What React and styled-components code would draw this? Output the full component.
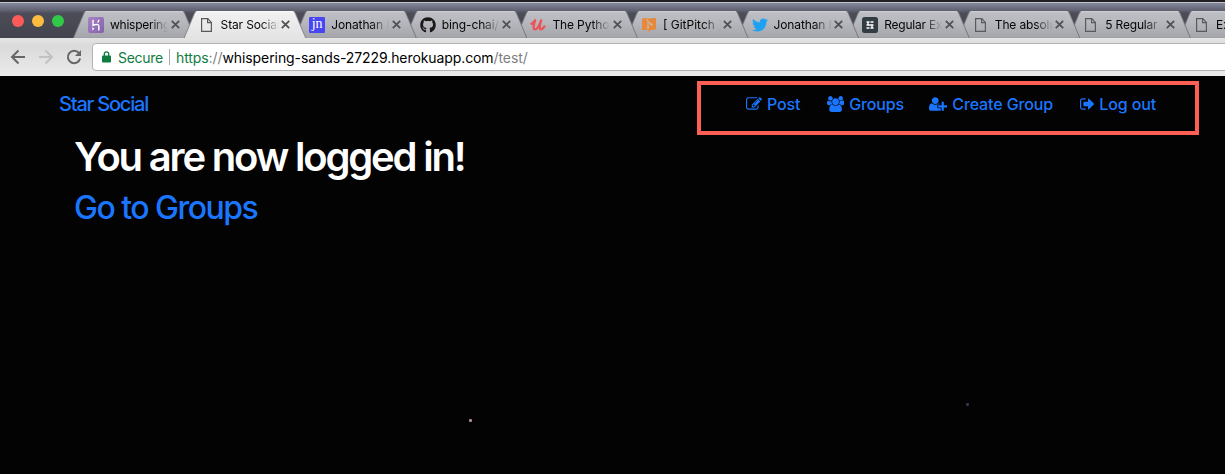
import React from 'react';
import styled, { createGlobalStyle, css } from 'styled-components';
import { FaGithub, FaTwitter } from 'react-icons/fa';

const GlobalStyle = createGlobalStyle`
  * { box-sizing: border-box; }
  body { margin: 0; background: #030303; font-family: Inter, "Liberation Sans", sans-serif; }
  a { color: inherit; text-decoration: none; }
`;

const Window = styled.div`
  position: relative;
  width: 1225px;
  height: 474px;
  overflow: hidden;
  background: #030303;
`;

const TabStrip = styled.div`
  display: flex;
  align-items: flex-end;
  height: 38px;
  border-top: 2px solid #221f25;
  background: linear-gradient(#c2c2c8 0, #c2c2c8 1px, #85889b 1px, #7b7e90 3px, #5d5f6e 9px, #4c4d58 11px, #42434c 36px);
`;

const Lights = styled.div`
  display: flex;
  gap: 8px;
  width: 73px;
  flex: none;
  padding: 0 0 11px 12px;
`;

const Light = styled.span`
  width: 12px;
  height: 12px;
  border-radius: 50%;
  background: ${(p) => p.$color};
`;

const edge = 'polygon(0 100%, 10.5px 2px, 12px 0, calc(100% - 12px) 0, calc(100% - 10.5px) 2px, 100% 100%)';

const TabBox = styled.div`
  position: relative;
  z-index: ${(p) => p.$z};
  flex: none;
  display: flex;
  align-items: center;
  width: 122.6px;
  height: 27px;
  margin-right: -12px;
  padding-left: 15px;
  &::before, &::after {
    content: "";
    position: absolute;
    z-index: -1;
    inset: 0;
    clip-path: ${edge};
  }
  &::before { background: ${(p) => (p.$active ? '#85868b' : '#77787e')}; }
  &::after {
    left: 1px;
    right: 1px;
    ${(p) => (p.$active
    ? css`background: linear-gradient(#fafafa 0, #f0f0f0 2px, #e4e4e4);`
    : css`background: linear-gradient(#d0d0d5 0, #bdbec3 2px, #b8b9be 10px, #a6a7ac 26px, #98999d 27px);`)}
  }
`;

const Favicon = styled.span`
  display: flex;
  flex: none;
  width: 16px;
  height: 16px;
  svg { display: block; }
`;

const TabTitle = styled.span`
  width: 59px;
  margin-left: 6px;
  overflow: hidden;
  white-space: nowrap;
  font-size: 12px;
  line-height: 16px;
  letter-spacing: ${(p) => p.$ls ?? -0.12}px;
  color: #050505;
  mask-image: linear-gradient(to right, #000 40px, transparent 58px);
`;

const CloseIcon = styled.svg`
  display: block;
  flex: none;
  width: 9px;
  height: 9px;
  margin-left: 1.5px;
  stroke: #505154;
  stroke-width: 1.8;
`;

const Toolbar = styled.div`
  display: flex;
  align-items: center;
  height: 38px;
  padding-left: 10px;
  background: linear-gradient(#e5e5e5, #dadada 8px, #e8e8e8 33px, #ececec);
`;

const ToolIcon = styled.svg`
  flex: none;
  width: 16px;
  height: 16px;
  margin-right: 12px;
  fill: none;
  stroke: ${(p) => (p.$dim ? '#c1c1c1' : '#666')};
  stroke-width: 2;
`;

const AddressBar = styled.div`
  display: flex;
  align-items: center;
  flex: 1;
  height: 28px;
  margin: 0 -4px 0 -2px;
  padding-left: 9px;
  border: 1px solid #b3b3b3;
  border-radius: 4px;
  background: #fff;
  font-size: 14px;
  white-space: nowrap;
`;

const Secure = styled.span`
  margin-left: 7px;
  width: 47px;
  letter-spacing: -0.3px;
  color: #0f7c3f;
`;

const Divider = styled.span`
  width: 1px;
  height: 16px;
  margin: 0 6px 0 4px;
  background: #aaa;
`;

const Url = styled.span`
  letter-spacing: -0.09px;
  color: #000;
`;

const Scheme = styled.span`color: #0f7c3f;`;
const Faded = styled.span`color: #808080;`;

const Page = styled.main`
  position: relative;
  height: 398px;
  background: #030303;
`;

const Navbar = styled.nav`
  display: flex;
  align-items: flex-start;
  justify-content: space-between;
  height: 59px;
  padding: 5px 26px 0 59px;
  color: #1b76ff;
`;

const Brand = styled.a`
  margin-top: 11px;
  font-size: 20px;
  line-height: 24px;
  font-weight: 450;
  letter-spacing: -1.2px;
`;

const NavLinks = styled.div`
  display: flex;
  width: 502px;
  height: 54px;
  padding: 7px 0 0 45px;
  border: 4px solid #fe5f55;
`;

const NavLink = styled.a`
  display: flex;
  align-items: center;
  flex: none;
  width: ${(p) => p.$w}px;
  height: 24px;
  font-size: 16px;
  font-weight: 450;
  letter-spacing: -0.12px;
  svg { flex: none; margin-right: 5px; fill: currentColor; }
`;

const Content = styled.section`
  padding-left: 74px;
`;

const Heading = styled.h1`
  margin: 0;
  font-size: 40px;
  line-height: 44px;
  font-weight: 600;
  letter-spacing: -2.18px;
  color: #fff;
`;

const SubHeading = styled.h2`
  margin: 10px 0 0;
  font-size: 32px;
  line-height: 38px;
  font-weight: 500;
  letter-spacing: -1.52px;
  color: #1b76ff;
`;

const Star = styled.i`
  position: absolute;
  left: ${(p) => p.$x}px;
  top: ${(p) => p.$y}px;
  width: 3px;
  height: 3px;
  border-radius: 1px;
  background: ${(p) => p.$color};
`;

const PageIcon = () => (
  <svg width="16" height="16" viewBox="0 0 16 16" fill="none" stroke="#5a5a5c" strokeWidth="1.2">
    <path d="M2.600 1.600h6.200l3.600 3.800v9H2.600zM8.600 1.800v3.800h3.600" />
  </svg>
);

const HerokuIcon = styled.span`
  display: flex;
  align-items: center;
  justify-content: center;
  width: 16px;
  height: 16px;
  border-radius: 2px;
  background: linear-gradient(135deg, #a783c5, #8462ab);
`;

const HerokuMark = () => (
  <HerokuIcon>
    <svg width="16" height="16" viewBox="0 0 16 16" fill="none" stroke="#fff" strokeWidth="1.400">
      <path d="M5 2.800v5.600c2-1 5.800-1.600 5.800.4v4.600M10.800 2.800c0 1.300-.4 2-1.200 2.800" />
      <path d="M4.400 10l2 1.800-2 1.800z" fill="#fff" stroke="none" />
    </svg>
  </HerokuIcon>
);

const JnIcon = styled.span`
  width: 16px;
  height: 16px;
  border-radius: 1px;
  background: #4845f5;
  color: #fff;
  font: 14px/13px "Liberation Serif", serif;
  text-align: center;
`;

const UdemyMark = () => (
  <svg width="17" height="16" viewBox="0 0 17 16" fill="none" stroke="#ed5356" strokeLinecap="round" strokeLinejoin="round">
    <path d="M1.500 6.800C3.300 6 4.600 4.500 5.400 3 4.500 5.800 2.400 12.700 5.300 12.700 8.200 12.700 10.500 7 11.800 3.200 10.700 6.500 9.300 12.500 11.700 12.500c1.500 0 2.800-1.500 3.700-3" strokeWidth="2.500" />
  </svg>
);

const PitchMark = () => (
  <svg width="16" height="16" viewBox="0 0 16 16">
    <path d="M1 1.500l4-.5 3 .5L15 1v11.500l-5 .3-2.200 2.700-.3-2.600L1 13z" fill="#e8883a" />
    <path d="M5.500 1.500l1.500 2.500v6.500M7 4.500l3.300 3" fill="none" stroke="#c9b6a8" strokeWidth="1.100" />
    <circle cx="10.300" cy="7.500" r="1.300" fill="#c9b6a8" />
    <circle cx="7" cy="10.500" r="1.200" fill="#c9b6a8" />
  </svg>
);

const GridMark = () => (
  <svg width="16" height="16" viewBox="0 0 16 16">
    <rect width="16" height="16" rx="2.500" fill="#313d42" />
    <path d="M4.500 5h3M8.500 5h3M4.500 8h7M4.500 11h3M8.500 11h3M6 5v3M10 8v3" stroke="#fff" strokeWidth="1.400" />
  </svg>
);

const Close = () => (
  <CloseIcon viewBox="0 0 9 9"><path d="M.8.8l7.400 7.400M8.200.8L.8 8.200" /></CloseIcon>
);

const tabs = [
  { title: 'whispering', ls: -0.25, icon: <HerokuMark /> },
  { title: 'Star Social', ls: -0.15, icon: <PageIcon />, active: true },
  { title: 'Jonathan N', icon: <JnIcon>jn</JnIcon> },
  { title: 'bing-chai/', icon: <FaGithub size={16} color="#1b1817" /> },
  { title: 'The Python', icon: <UdemyMark /> },
  { title: '[ GitPitch ]', ls: 0, icon: <PitchMark /> },
  { title: 'Jonathan N', icon: <FaTwitter size={16} color="#1da1f2" /> },
  { title: 'Regular Ex', ls: -0.2, icon: <GridMark /> },
  { title: 'The absolu', icon: <PageIcon /> },
  { title: '5 Regular', ls: -0.2, icon: <PageIcon /> },
  { title: 'Expression', ls: 0, icon: <PageIcon /> },
];

const links = [
  { label: 'Post', w: 81, iw: 16, vb: '0 0 1792 1792', d: 'M888 1184l116-116-152-152-116 116v56h96v96h56zm440-720q-16-16-33 1l-350 350q-17 17-1 33t33-1l350-350q17-17 1-33zm80 594v190q0 119-84.500 203.500t-203.500 84.500h-832q-119 0-203.500-84.500t-84.500-203.500v-832q0-119 84.500-203.500t203.500-84.500h832q63 0 117 25 15 7 18 23 3 17-9 29l-49 49q-14 14-32 8-23-6-45-6h-832q-66 0-113 47t-47 113v832q0 66 47 113t113 47h832q66 0 113-47t47-113v-126q0-13 9-22l64-64q15-15 35-7t20 29zm-96-738l288 288-672 672h-288v-288zm444 132l-92 92-288-288 92-92q28-28 68-28t68 28l152 152q28 28 28 68t-28 68z' },
  { label: 'Groups', w: 102, iw: 17.14, vb: '0 0 1920 1792', d: 'M593 896q-162 5-265 128h-134q-82 0-138-40.500t-56-118.500q0-353 124-353 6 0 43.500 21t97.500 42.500 119 21.500q67 0 133-23-5 37-5 66 0 159 90 287zm1071 637q0 120-73 189.500t-194 69.500h-874q-121 0-194-69.500t-73-189.500q0-53 3.500-103.500t14-109 26.500-108.500 43-97.500 62-81 85.500-53.500 111.500-20q10 0 43 21.500t73 48 107 48 135 21.500 135-21.500 107-48 73-48 43-21.500q61 0 111.500 20t85.500 53.500 62 81 43 97.500 26.500 108.500 14 109 3.500 103.500zm-1024-1277q0 106-75 181t-181 75-181-75-75-181 75-181 181-75 181 75 75 181zm704 384q0 159-112.500 271.500t-271.500 112.500-271.500-112.500-112.500-271.500 112.500-271.500 271.500-112.500 271.500 112.500 112.500 271.500zm576 225q0 78-56 118.500t-138 40.500h-134q-103-123-265-128 90-128 90-287 0-29-5-66 66 23 133 23 59 0 119-21.500t97.500-42.500 43.500-21q124 0 124 353zm-128-609q0 106-75 181t-181 75-181-75-75-181 75-181 181-75 181 75 75 181z' },
  { label: 'Create Group', w: 150.5, iw: 18.29, vb: '0 0 2048 1792', d: 'M704 896q-159 0-271.500-112.500t-112.500-271.500 112.500-271.500 271.500-112.500 271.500 112.500 112.500 271.500-112.500 271.500-271.500 112.500zm960 128h352q13 0 22.500 9.500t9.500 22.500v192q0 13-9.500 22.500t-22.500 9.500h-352v352q0 13-9.500 22.500t-22.500 9.500h-192q-13 0-22.500-9.500t-9.500-22.500v-352h-352q-13 0-22.500-9.500t-9.500-22.500v-192q0-13 9.500-22.500t22.500-9.500h352v-352q0-13 9.500-22.500t22.500-9.500h192q13 0 22.500 9.500t9.500 22.500v352zm-736 224q0 52 38 90t90 38h256v238q-68 50-171 50h-874q-121 0-194-69t-73-190q0-53 3.500-103.500t14-109 26.500-108.500 43-97.500 62-81 85.500-53.500 111.500-20q19 0 39 17 79 61 154.500 91.500t164.500 30.500 164.500-30.500 154.500-91.500q20-17 39-17 132 0 217 96h-223q-52 0-90 38t-38 90v192z' },
  { label: 'Log out', w: 90, iw: 14.86, vb: '0 0 1664 1792', d: 'M640 1440q0 4 1 20t.5 26.500-3 23.500-10 19.500-20.500 6.500h-320q-119 0-203.500-84.500t-84.500-203.500v-704q0-119 84.500-203.500t203.500-84.500h320q13 0 22.500 9.500t9.500 22.500q0 4 1 20t.5 26.500-3 23.500-10 19.500-20.500 6.500h-320q-66 0-113 47t-47 113v704q0 66 47 113t113 47h312l11.500 1 11.500 3 8 5.500 7 9 2 13.500zm928-544q0 26-19 45l-544 544q-19 19-45 19t-45-19-19-45v-288h-448q-26 0-45-19t-19-45v-384q0-26 19-45t45-19h448v-288q0-26 19-45t45-19 45 19l544 544q19 19 19 45z' },
];

export default function App() {
  return (
    <Window>
      <GlobalStyle />
      <TabStrip>
        <Lights>
          <Light $color="#fc5b57" />
          <Light $color="#fdbc40" />
          <Light $color="#33c948" />
        </Lights>
        {tabs.map((t, i) => (
          <TabBox key={i} $active={t.active} $z={t.active ? 30 : 20 - i}>
            <Favicon>{t.icon}</Favicon>
            <TabTitle $ls={t.ls}>{t.title}</TabTitle>
            <Close />
          </TabBox>
        ))}
      </TabStrip>
      <Toolbar>
        <ToolIcon viewBox="0 0 16 16"><path d="M15 8H2.500M8.500 1.500L2 8l6.500 6.500" /></ToolIcon>
        <ToolIcon $dim viewBox="0 0 16 16"><path d="M1 8h12.500M7.500 1.500L14 8l-6.500 6.500" /></ToolIcon>
        <ToolIcon viewBox="0 0 16 16">
          <path d="M13 4.200A6.200 6.200 0 1 0 14.100 9.500" />
          <path d="M15 1v6H9z" fill="#666" stroke="none" />
        </ToolIcon>
        <AddressBar>
          <svg width="9" height="12" viewBox="0 0 9 12">
            <rect x="0" y="4.500" width="9" height="7" rx="0.800" fill="#0f7c3f" />
            <path d="M2.300 5V3a2.200 2.200 0 0 1 4.400 0v2" fill="none" stroke="#0f7c3f" strokeWidth="1.300" />
          </svg>
          <Secure>Secure</Secure>
          <Divider />
          <Url><Scheme>https</Scheme><Faded>://</Faded>whispering-sands-27229.herokuapp.com<Faded>/test/</Faded></Url>
        </AddressBar>
      </Toolbar>
      <Page>
        <Navbar>
          <Brand href="#">Star Social</Brand>
          <NavLinks>
            {links.map((l) => (
              <NavLink key={l.label} href="#" $w={l.w}>
                <svg width={l.iw} height="16" viewBox={l.vb}><path d={l.d} /></svg>
                {l.label}
              </NavLink>
            ))}
          </NavLinks>
        </Navbar>
        <Content>
          <Heading>You are now logged in!</Heading>
          <SubHeading><a href="#">Go to Groups</a></SubHeading>
        </Content>
        <Star $x={469} $y={343} $color="#a98f8c" />
        <Star $x={966} $y={327} $color="#3c3148" />
      </Page>
    </Window>
  );
}
